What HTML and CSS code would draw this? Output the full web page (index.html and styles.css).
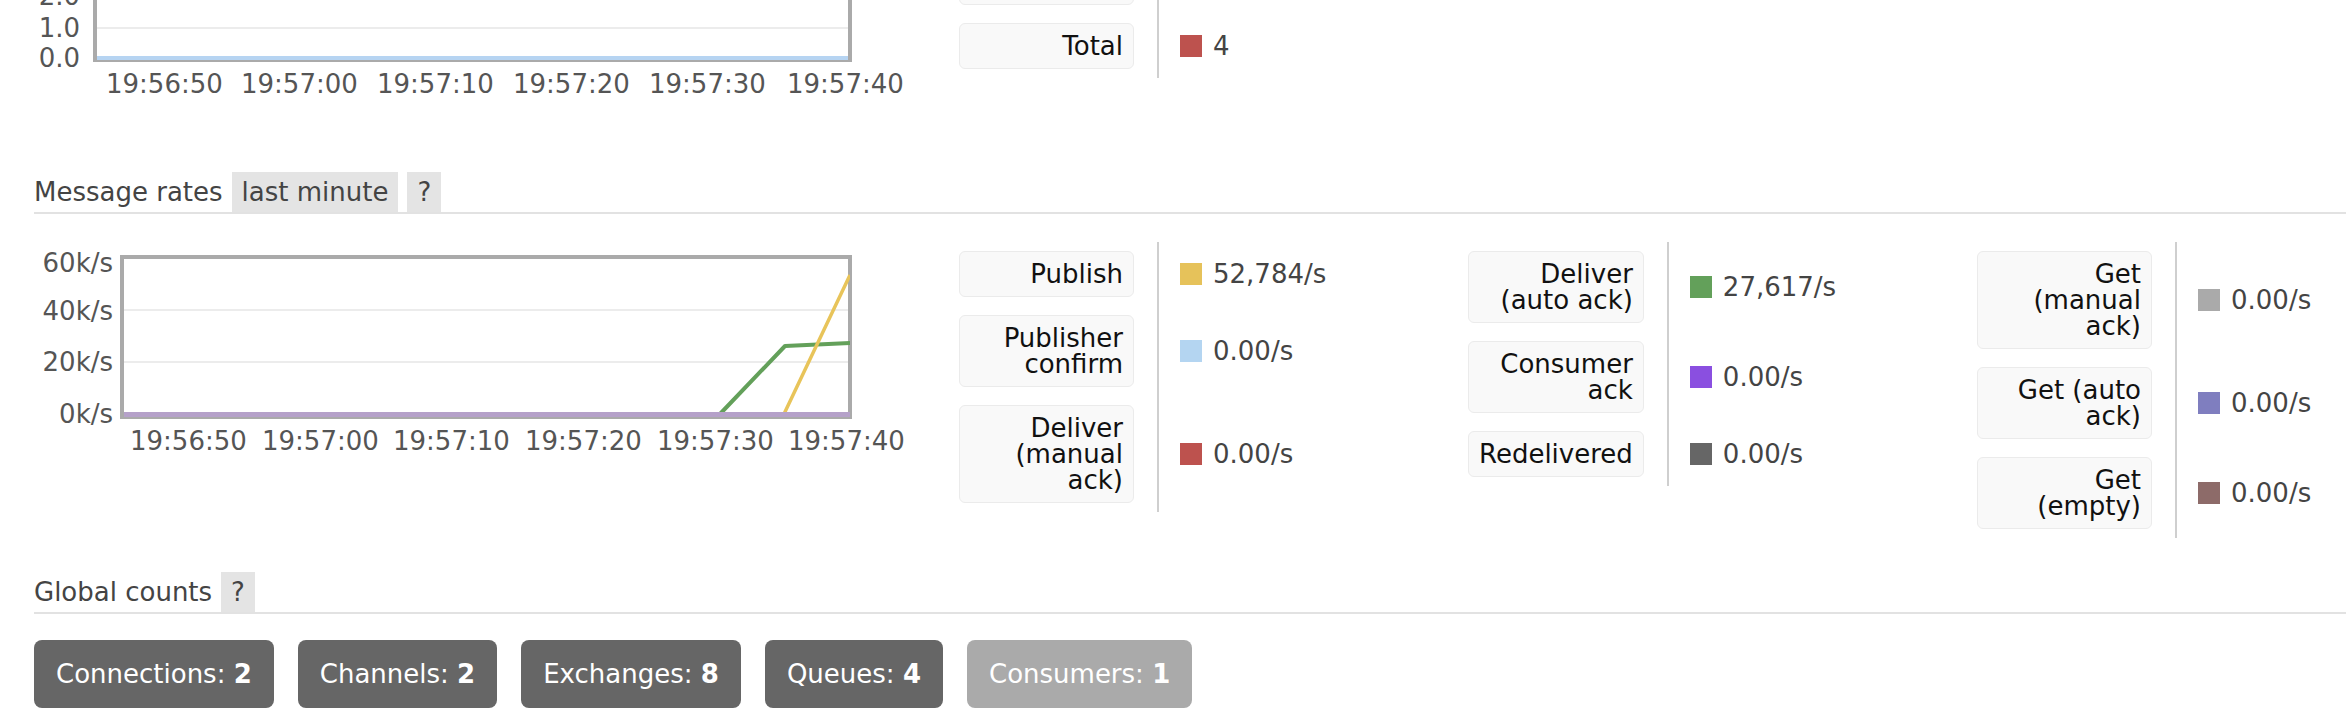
FILE: index.html
```html
<!DOCTYPE html>
<html>
<head>
<meta charset="utf-8">
<title>Overview</title>
<link rel="stylesheet" href="styles.css">
</head>
<body>
<main class="page">
  <section class="section queued">
    <div class="chart">
      <svg class="plot" width="925" height="214" viewBox="0 0 925 214">
        <g class="grid">
          <line x1="63" y1="50.5" x2="814" y2="50.5"/>
          <line x1="63" y1="81" x2="814" y2="81"/>
          <line x1="63" y1="111.5" x2="814" y2="111.5"/>
          <line x1="63" y1="142" x2="814" y2="142"/>
        </g>
        <rect class="frame" x="61" y="16" width="755" height="158"/>
        <rect class="fill-blue" x="63" y="170" width="751" height="4"/>
        <g class="tick ylab">
          <text x="46" y="119">2.0</text>
          <text x="46" y="151">1.0</text>
          <text x="46" y="181">0.0</text>
        </g>
        <g class="tick">
          <text x="72" y="207">19:56:50</text>
          <text x="207" y="207">19:57:00</text>
          <text x="343" y="207">19:57:10</text>
          <text x="479" y="207">19:57:20</text>
          <text x="615" y="207">19:57:30</text>
          <text x="753" y="207">19:57:40</text>
        </g>
      </svg>
    </div>
    <div class="group">
      <table class="facts">
        <tr><th><div class="lbl">Ready</div></th><td><span class="val"><i class="sw c-yellow"></i>4</span></td></tr>
        <tr><th><div class="lbl">Unacked</div></th><td><span class="val"><i class="sw c-blue"></i>0</span></td></tr>
        <tr><th><div class="lbl">Total</div></th><td><span class="val"><i class="sw c-red"></i>4</span></td></tr>
      </table>
    </div>
  </section>

  <h3 class="heading rates-heading">
    <span class="title">Message rates</span>
    <span class="tag">last minute</span>
    <span class="tag">?</span>
  </h3>

  <section class="section rates">
    <div class="chart">
      <svg class="plot" width="925" height="220" viewBox="0 0 925 220">
        <defs>
          <clipPath id="plotclip"><rect x="90" y="17" width="726" height="158"/></clipPath>
        </defs>
        <g class="grid">
          <line x1="90" y1="68" x2="816" y2="68"/>
          <line x1="90" y1="120" x2="816" y2="120"/>
        </g>
        <rect class="frame" x="88" y="15" width="728" height="160"/>
        <g clip-path="url(#plotclip)">
          <polyline class="ln-green" points="90,173 686,172 751,104 816,101"/>
          <polyline class="ln-yellow" points="90,173 750,172 816,33"/>
          <rect class="fill-purple" x="90" y="170" width="726" height="5"/>
        </g>
        <g class="tick ylab">
          <text x="79" y="30">60k/s</text>
          <text x="79" y="78">40k/s</text>
          <text x="79" y="129">20k/s</text>
          <text x="79" y="181">0k/s</text>
        </g>
        <g class="tick">
          <text x="96" y="208">19:56:50</text>
          <text x="228" y="208">19:57:00</text>
          <text x="359" y="208">19:57:10</text>
          <text x="491" y="208">19:57:20</text>
          <text x="623" y="208">19:57:30</text>
          <text x="754" y="208">19:57:40</text>
        </g>
      </svg>
    </div>
    <div class="group">
      <table class="facts">
        <tr><th><div class="lbl">Publish</div></th><td><span class="val"><i class="sw c-yellow"></i>52,784/s</span></td></tr>
        <tr><th><div class="lbl">Publisher confirm</div></th><td><span class="val"><i class="sw c-blue"></i>0.00/s</span></td></tr>
        <tr><th><div class="lbl">Deliver (manual ack)</div></th><td><span class="val"><i class="sw c-red"></i>0.00/s</span></td></tr>
      </table>
    </div>
    <div class="group">
      <table class="facts">
        <tr><th><div class="lbl">Deliver (auto ack)</div></th><td><span class="val"><i class="sw c-green"></i>27,617/s</span></td></tr>
        <tr><th><div class="lbl">Consumer ack</div></th><td><span class="val"><i class="sw c-purple"></i>0.00/s</span></td></tr>
        <tr><th><div class="lbl">Redelivered</div></th><td><span class="val"><i class="sw c-dark"></i>0.00/s</span></td></tr>
      </table>
    </div>
    <div class="group last">
      <table class="facts">
        <tr><th><div class="lbl">Get (manual ack)</div></th><td><span class="val"><i class="sw c-grey"></i>0.00/s</span></td></tr>
        <tr><th><div class="lbl">Get (auto ack)</div></th><td><span class="val"><i class="sw c-slate"></i>0.00/s</span></td></tr>
        <tr><th><div class="lbl">Get (empty)</div></th><td><span class="val"><i class="sw c-brown"></i>0.00/s</span></td></tr>
      </table>
    </div>
  </section>

  <h3 class="heading global-heading">
    <span class="title">Global counts</span>
    <span class="tag">?</span>
  </h3>

  <div class="counts">
    <a class="btn">Connections: <b>2</b></a>
    <a class="btn">Channels: <b>2</b></a>
    <a class="btn">Exchanges: <b>8</b></a>
    <a class="btn">Queues: <b>4</b></a>
    <a class="btn btn-muted">Consumers: <b>1</b></a>
  </div>
</main>
</body>
</html>
```

FILE: styles.css
```css
html, body {
  margin: 0;
  padding: 0;
  background: #fff;
}

body {
  font-family: "DejaVu Sans", Verdana, sans-serif;
  font-size: 26px;
  color: #444;
}

.page {
  padding-left: 34px;
}

.section {
  display: flex;
  align-items: flex-start;
}

.queued {
  margin-top: -114px;
}

.chart {
  flex: 0 0 925px;
}

.plot {
  display: block;
}

.grid line {
  stroke: #ececec;
  stroke-width: 2;
}

.frame {
  fill: none;
  stroke: #aaaaaa;
  stroke-width: 4;
}

.fill-blue {
  fill: #b6d4f2;
}

.fill-purple {
  fill: #b5a1c9;
}

.ln-green {
  fill: none;
  stroke: #63a05a;
  stroke-width: 4;
  stroke-linejoin: round;
}

.ln-yellow {
  fill: none;
  stroke: #e8c45a;
  stroke-width: 3.5;
  stroke-linejoin: round;
}

.tick text {
  font-family: "DejaVu Sans", Verdana, sans-serif;
  font-size: 26px;
  fill: #555;
}

.ylab text {
  text-anchor: end;
}

.group {
  flex: 0 0 509px;
}

.group.last {
  flex: 1 1 auto;
}

.facts {
  border-collapse: collapse;
}

.facts th {
  width: 175px;
  padding: 9px 23px 9px 0;
  font-weight: normal;
  text-align: right;
  vertical-align: middle;
}

.lbl {
  padding: 9px 10px;
  border: 1px solid #ebebeb;
  border-radius: 6px;
  background: #f9f9f9;
  color: #111;
  line-height: 26px;
}

.facts td {
  border-left: 2px solid #cfcfcf;
  padding: 0 0 0 21px;
  vertical-align: middle;
}

.val {
  display: flex;
  align-items: center;
  line-height: 26px;
  color: #444;
  white-space: nowrap;
}

.sw {
  display: block;
  flex: none;
  width: 22px;
  height: 22px;
  margin-right: 11px;
}

.c-yellow { background: #e6c25a; }
.c-blue { background: #b4d5f1; }
.c-red { background: #bd524e; }
.c-green { background: #63a05a; }
.c-purple { background: #8a4fe0; }
.c-dark { background: #666666; }
.c-grey { background: #aaaaaa; }
.c-slate { background: #7f7ebf; }
.c-brown { background: #8d6b69; }

.heading {
  display: flex;
  align-items: center;
  gap: 9px;
  height: 40px;
  margin: 0;
  border-bottom: 2px solid #e2e2e2;
  font-size: 26px;
  font-weight: normal;
  color: #444;
}

.heading .title {
  line-height: 40px;
}

.tag {
  background: #e4e4e4;
  padding: 0 10px;
  line-height: 40px;
}

.rates-heading {
  margin-top: 72px;
}

.rates {
  margin-top: 28px;
}

.global-heading {
  margin-top: 34px;
}

.counts {
  display: flex;
  gap: 24px;
  margin-top: 26px;
}

.btn {
  display: block;
  height: 68px;
  line-height: 68px;
  padding: 0 22px;
  border-radius: 8px;
  background: #666;
  color: #fff;
  font-size: 26px;
  text-decoration: none;
  white-space: nowrap;
}

.btn b {
  font-weight: bold;
}

.btn-muted {
  background: #aaa;
}
```
